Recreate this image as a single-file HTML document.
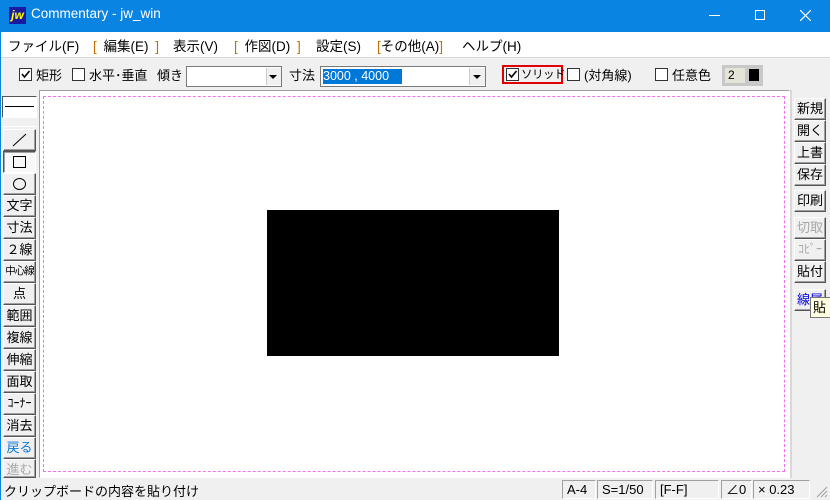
<!DOCTYPE html>
<html><head><meta charset="utf-8">
<style>
*{margin:0;padding:0;box-sizing:border-box}
body{width:830px;height:500px;overflow:hidden;background:#f0f0f0;font-family:"Liberation Sans","Noto Sans CJK JP",sans-serif;font-size:13px;color:#000;position:relative}
.a{position:absolute}
.title{left:0;top:0;width:830px;height:32px;background:#0a84e3;color:#fff}
.menu{left:1px;top:32px;width:829px;height:25px;background:#fff;font-size:13.5px}
.menu span{position:absolute;top:3px;white-space:nowrap}
.tb{left:1px;top:57px;width:829px;height:33px;background:#f0f0f0;border-top:1px solid #d8d8d8}
.cb{position:absolute;width:13px;height:13px;border:1px solid #333;background:#fff}
.lbl{position:absolute;white-space:nowrap;font-size:13px}
.btn{position:absolute;background:#f0f0f0;border:1px solid;border-color:#fff #555 #555 #fff;box-shadow:inset -1px -1px #a0a0a0;text-align:center;font-size:13px;line-height:19px;white-space:nowrap;overflow:hidden}
.lb{left:3px;width:33px;height:22px}
.rb{left:794px;width:32px;height:22px}
.st{position:absolute;top:480px;height:19px;border:1px solid;border-color:#a0a0a0 #fff #fff #a0a0a0;font-size:13px;line-height:17px;padding-left:4px;white-space:nowrap}
</style></head><body>
<div class="a" style="left:0;top:0;width:1px;height:500px;background:#0a84e3"></div>
<div class="a title">
 <div class="a" style="left:9px;top:7px;width:17px;height:17px;background:#1a1aa0;color:#ff0;font-weight:bold;font-style:italic;font-size:12px;line-height:16px;text-align:center">jw</div>
 <div class="a" style="left:31px;top:6px;font-size:13.5px">Commentary - jw_win</div>
 <div class="a" style="left:709px;top:15px;width:11px;height:1px;background:#fff"></div>
 <div class="a" style="left:755px;top:10px;width:10px;height:10px;border:1px solid #fff"></div>
 <svg class="a" style="left:800px;top:10px" width="11" height="11"><path d="M0 0L11 11M11 0L0 11" stroke="#fff" stroke-width="1.2"/></svg>
</div>
<div class="a menu">
 <span style="left:7px">ファイル(F)</span>
 <span style="left:92px;word-spacing:3px"><b style="color:#c07000;font-weight:normal">[</b> 編集(E) <b style="color:#c07000;font-weight:normal">]</b></span>
 <span style="left:172px">表示(V)</span>
 <span style="left:233px;word-spacing:3px"><b style="color:#c07000;font-weight:normal">[</b> 作図(D) <b style="color:#c07000;font-weight:normal">]</b></span>
 <span style="left:315px">設定(S)</span>
 <span style="left:376px"><b style="color:#c07000;font-weight:normal">[</b>その他(A)<b style="color:#c07000;font-weight:normal">]</b></span>
 <span style="left:461px">ヘルプ(H)</span>
</div>
<div class="a tb"></div>
<div class="cb" style="left:19px;top:68px"><svg width="11" height="11" style="position:absolute;left:0;top:0"><path d="M2 5L4.5 8L9.5 2" stroke="#000" stroke-width="1.6" fill="none"/></svg></div>
<div class="lbl" style="left:36px;top:65px">矩形</div>
<div class="cb" style="left:72px;top:68px"></div>
<div class="lbl" style="left:89px;top:65px">水平･垂直</div>
<div class="lbl" style="left:157px;top:65px">傾き</div>
<div class="a" style="left:186px;top:66px;width:96px;height:21px;background:#fff;border:1px solid #7a7a7a"></div>
<div class="a" style="left:266px;top:68px;width:15px;height:17px;background:#f0f0f0;border-left:1px solid #ccc"></div>
<div class="a" style="left:269px;top:75px;border-left:4px solid transparent;border-right:4px solid transparent;border-top:4px solid #000"></div>
<div class="lbl" style="left:289px;top:65px">寸法</div>
<div class="a" style="left:320px;top:66px;width:166px;height:21px;background:#fff;border:1px solid #7a7a7a"></div>
<div class="a" style="left:323px;top:69px;width:79px;height:15px;background:#0078d7;color:#fff;font-size:12.5px;line-height:15px;white-space:pre">3000 , 4000</div>
<div class="a" style="left:469px;top:68px;width:16px;height:17px;background:#f0f0f0;border-left:1px solid #ccc"></div>
<div class="a" style="left:473px;top:75px;border-left:4px solid transparent;border-right:4px solid transparent;border-top:4px solid #000"></div>
<div class="a" style="left:502px;top:65px;width:61px;height:19px;border:2px solid #e00000"></div>
<div class="cb" style="left:506px;top:68px"><svg width="11" height="11" style="position:absolute;left:0;top:0"><path d="M2 5L4.5 8L9.5 2" stroke="#000" stroke-width="1.6" fill="none"/></svg></div>
<div class="lbl" style="left:521px;top:66px;font-size:11.5px;letter-spacing:-0.5px">ソリッド</div>
<div class="cb" style="left:567px;top:68px"></div>
<div class="lbl" style="left:584px;top:65px">(対角線)</div>
<div class="cb" style="left:655px;top:68px"></div>
<div class="lbl" style="left:672px;top:65px">任意色</div>
<div class="a" style="left:722px;top:65px;width:41px;height:21px;background:#c8c8c8"></div>
<div class="a" style="left:725px;top:68px;width:20px;height:15px;background:#e4e4d8;font-size:12px;line-height:15px;padding-left:3px">2</div>
<div class="a" style="left:749px;top:69px;width:10px;height:12px;background:#000"></div>

<div class="a" style="left:39px;top:90px;width:751px;height:388px;background:#fff;border:1px solid;border-color:#a0a0a0 #fff #fff #a0a0a0"></div>
<div class="a" style="left:43px;top:96px;width:742px;height:376px;border:1px dashed #f070f0"></div>
<div class="a" style="left:267px;top:210px;width:292px;height:146px;background:#000"></div>
<div class="a" style="left:790px;top:90px;width:2px;height:388px;background:#d8d8d8"></div>

<div class="a" style="left:2px;top:96px;width:35px;height:22px;background:#fff;border:1px solid;border-color:#555 #fff #fff #555"><div class="a" style="left:2px;top:9px;width:29px;height:1px;background:#000"></div></div>
<div class="a" style="left:2px;top:126px;width:35px;height:1px;background:#fff"></div>
<div class="btn lb" style="top:129px"><svg width="31" height="20"><path d="M9 16L22 4" stroke="#000"/></svg></div>
<div class="btn lb" style="top:151px;border-color:#555 #fff #fff #555;box-shadow:inset 1px 1px #a0a0a0;background:#f8f8f8"><div class="a" style="left:9px;top:4px;width:13px;height:12px;border:1px solid #000"></div></div>
<div class="btn lb" style="top:173px"><div class="a" style="left:9px;top:4px;width:13px;height:12px;border:1px solid #000;border-radius:50%"></div></div>
<div class="btn lb" style="top:195px">文字</div>
<div class="btn lb" style="top:217px">寸法</div>
<div class="btn lb" style="top:239px">２線</div>
<div class="btn lb" style="top:261px;font-size:10.5px;letter-spacing:-1px">中心線</div>
<div class="btn lb" style="top:283px">点</div>
<div class="btn lb" style="top:305px">範囲</div>
<div class="btn lb" style="top:327px">複線</div>
<div class="btn lb" style="top:349px">伸縮</div>
<div class="btn lb" style="top:371px">面取</div>
<div class="btn lb" style="top:393px;font-size:12px">ｺｰﾅｰ</div>
<div class="btn lb" style="top:415px">消去</div>
<div class="btn lb" style="top:437px;color:#0a78d8">戻る</div>
<div class="btn lb" style="top:459px;color:#a8a8a8;height:19px">進む</div>

<div class="btn rb" style="top:98px">新規</div>
<div class="btn rb" style="top:120px">開く</div>
<div class="btn rb" style="top:142px">上書</div>
<div class="btn rb" style="top:164px">保存</div>
<div class="btn rb" style="top:190px">印刷</div>
<div class="btn rb" style="top:217px;color:#a8a8a8">切取</div>
<div class="btn rb" style="top:239px;color:#a8a8a8;font-size:12px">ｺﾋﾟｰ</div>
<div class="btn rb" style="top:261px">貼付</div>
<div class="btn rb" style="top:289px;color:#0000e0">線属</div>
<div class="a" style="left:810px;top:297px;width:22px;height:21px;background:#ffffe1;border:1px solid #767676;font-size:13px;line-height:19px;padding-left:2px;overflow:hidden">貼</div>

<div class="lbl" style="left:4px;top:481px">クリップボードの内容を貼り付け</div>
<div class="st" style="left:562px;width:34px">A-4</div>
<div class="st" style="left:597px;width:56px">S=1/50</div>
<div class="st" style="left:655px;width:64px">[F-F]</div>
<div class="st" style="left:721px;width:31px">∠0</div>
<div class="st" style="left:753px;width:57px">× 0.23</div>
<svg class="a" style="left:815px;top:485px" width="13" height="13"><path d="M12 2L2 12M12 6L6 12M12 10L10 12" stroke="#a0a0a0"/></svg>
</body></html>
